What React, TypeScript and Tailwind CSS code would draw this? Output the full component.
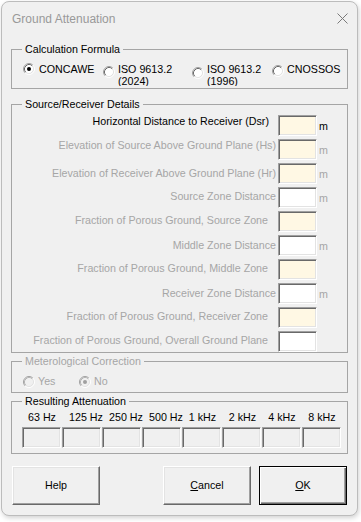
import React from 'react';

type RowDef = {
  label: string;
  enabled?: boolean;
  cream: boolean;
  unit: boolean;
  labelClass: string;
};

const rows: RowDef[] = [
  { label: 'Horizontal Distance to Receiver (Dsr)', enabled: true, cream: true, unit: true, labelClass: 'mr-[9px] mb-[8px]' },
  { label: 'Elevation of Source Above Ground Plane (Hs)', cream: true, unit: true, labelClass: 'mr-[2px] mb-[8px]' },
  { label: 'Elevation of Receiver Above Ground Plane (Hr)', cream: true, unit: true, labelClass: 'mr-[2px]' },
  { label: 'Source Zone Distance', cream: false, unit: true, labelClass: 'mr-[2px] mb-[2px]' },
  { label: 'Fraction of Porous Ground, Source Zone', cream: true, unit: false, labelClass: 'mr-[10px] mb-[2px]' },
  { label: 'Middle Zone Distance', cream: false, unit: true, labelClass: 'mr-[2px] mb-[1px]' },
  { label: 'Fraction of Porous Ground, Middle Zone', cream: true, unit: false, labelClass: 'mr-[10px] mb-[2px]' },
  { label: 'Receiver Zone Distance', cream: false, unit: true, labelClass: 'mr-[2px] mb-[1px]' },
  { label: 'Fraction of Porous Ground, Receiver Zone', cream: true, unit: false, labelClass: 'mr-[10px] mb-[2px]' },
  { label: 'Fraction of Porous Ground, Overall Ground Plane', cream: false, unit: false, labelClass: 'mr-[10px] mb-[3px]' },
];

const bands = [
  { label: '63 Hz', cls: '' },
  { label: '125 Hz', cls: 'pl-[7px]' },
  { label: '250 Hz', cls: 'pl-[7px]' },
  { label: '500 Hz', cls: 'pl-[7px]' },
  { label: '1 kHz', cls: 'pl-[1px]' },
  { label: '2 kHz', cls: 'pl-[1px]' },
  { label: '4 kHz', cls: '' },
  { label: '8 kHz', cls: '' },
];

// classic sunken option button
function Radio({ checked, disabled }: { checked?: boolean; disabled?: boolean }) {
  return (
    <svg width="12" height="12" viewBox="0 0 12 12" className="shrink-0">
      <circle cx="6" cy="6" r="4.5" fill={disabled ? '#f0f0f0' : '#ffffff'} />
      <path d="M2.11 9.89A5.5 5.5 0 0 1 9.89 2.11" fill="none" stroke="#a0a0a0" />
      <path d="M2.82 9.18A4.5 4.5 0 0 1 9.18 2.82" fill="none" stroke={disabled ? '#b4b4b4' : '#696969'} />
      <path d="M9.89 2.11A5.5 5.5 0 0 1 2.11 9.89" fill="none" stroke="#ffffff" />
      <path d="M9.18 2.82A4.5 4.5 0 0 1 2.82 9.18" fill="none" stroke="#e3e3e3" />
      {checked && <circle cx="6" cy="6" r="2" fill={disabled ? '#a0a0a0' : '#000000'} />}
    </svg>
  );
}

function Legend({ children, disabled }: { children: React.ReactNode; disabled?: boolean }) {
  return (
    <legend className={`ml-[10px] px-[3px] leading-[14px] ${disabled ? 'text-[#a6a6a6]' : 'text-black'}`}>
      {children}
    </legend>
  );
}

export default function App() {
  return (
    <div className="w-[361px] h-[522px] bg-white overflow-hidden font-['Liberation_Sans',Arial,sans-serif] text-[10.7px] text-black">
      <div className="mt-[1px] ml-[1px] w-[357px] h-[515px] flex flex-col border border-[#bcbcbc] rounded-[8px] bg-[#f0f0f0] shadow-[1px_2px_5px_rgba(0,0,0,0.18)]">
        {/* Title bar */}
        <div className="h-[33px] flex items-center justify-between pl-[10px] pr-[9px]">
          <span className="text-[12px] text-[#999999]">Ground Attenuation</span>
          <svg width="11" height="11" viewBox="0 0 11 11">
            <path d="M0.5 0.5L10.5 10.5M10.5 0.5L0.5 10.5" stroke="#7a7a7a" strokeWidth="1" />
          </svg>
        </div>

        <div className="flex flex-col px-[9px] pt-[7px]">
          {/* Calculation Formula */}
          <fieldset className="border border-[#a5a5a5] pb-[2px]">
            <Legend>Calculation Formula</Legend>
            <div className="h-[30px] overflow-hidden flex pl-[11px]">
              <div className="w-[80px] flex items-start">
                <div className="mt-[7px]"><Radio checked /></div>
                <div className="mt-[7px] ml-[4px] leading-[13px]">CONCAWE</div>
              </div>
              <div className="w-[89px] flex items-start">
                <div className="mt-[10px]"><Radio /></div>
                <div className="mt-[7px] ml-[3px] leading-[12px]">ISO 9613.2<br />(2024)</div>
              </div>
              <div className="w-[80px] flex items-start">
                <div className="mt-[11px]"><Radio /></div>
                <div className="mt-[7px] ml-[3px] leading-[12px]">ISO 9613.2<br />(1996)</div>
              </div>
              <div className="flex items-start">
                <div className="mt-[9px]"><Radio /></div>
                <div className="mt-[7px] ml-[3px] leading-[13px]">CNOSSOS</div>
              </div>
            </div>
          </fieldset>

          {/* Source/Receiver Details */}
          <fieldset className="mt-[8px] border border-[#a5a5a5]">
            <Legend>Source/Receiver Details</Legend>
            <div className="mt-[4px] flex flex-col gap-[3px]">
              {rows.map((r) => (
                <div key={r.label} className="h-[21px] flex items-center">
                  <div className={`flex-1 text-right leading-[13px] whitespace-nowrap ${r.labelClass} ${r.enabled ? 'text-black' : 'text-[#a6a6a6]'}`}>
                    {r.label}
                  </div>
                  <div
                    className={`w-[39px] h-[21px] border border-t-[#a0a0a0] border-l-[#a0a0a0] border-r-white border-b-white shadow-[inset_1px_1px_0_#696969,inset_-1px_-1px_0_#e3e3e3] ${r.cream ? 'bg-[#fff8e4]' : 'bg-white'}`}
                  />
                  <div className={`w-[30px] pl-[2px] pt-[2px] leading-[13px] ${r.enabled ? 'text-black' : 'text-[#a6a6a6]'}`}>
                    {r.unit ? 'm' : ''}
                  </div>
                </div>
              ))}
            </div>
          </fieldset>

          {/* Meterological Correction */}
          <fieldset className="mt-[1px] border border-[#a5a5a5]">
            <Legend disabled>Meterological Correction</Legend>
            <div className="h-[24px] flex items-start pl-[11px] text-[#a6a6a6]">
              <div className="mt-[8px]"><Radio disabled /></div>
              <div className="mt-[7px] ml-[3px] w-[41px] leading-[13px]">Yes</div>
              <div className="mt-[8px]"><Radio checked disabled /></div>
              <div className="mt-[7px] ml-[3px] leading-[13px]">No</div>
            </div>
          </fieldset>

          {/* Resulting Attenuation */}
          <fieldset className="mt-[1px] border border-[#a5a5a5] pb-[5px]">
            <Legend>Resulting Attenuation</Legend>
            <div className="mt-[3px] h-[13px] flex pl-[10px] leading-[13px]">
              {bands.map((b) => (
                <div key={b.label} className={`w-[40px] text-center whitespace-nowrap ${b.cls}`}>
                  {b.label}
                </div>
              ))}
            </div>
            <div className="mt-[3px] flex gap-[1px] pl-[10px]">
              {bands.map((b) => (
                <div
                  key={b.label}
                  className="w-[39px] h-[21px] border border-t-[#a0a0a0] border-l-[#a0a0a0] border-r-white border-b-white shadow-[inset_1px_1px_0_#696969,inset_-1px_-1px_0_#e3e3e3] bg-[#f0f0f0]"
                />
              ))}
            </div>
          </fieldset>

          {/* Buttons */}
          <div className="mt-[12px] flex">
            <button className="ml-[1px] w-[88px] h-[39px] border border-t-white border-l-white border-r-[#696969] border-b-[#696969] shadow-[inset_-1px_-1px_0_#a0a0a0,inset_1px_1px_0_#e3e3e3] bg-[#f0f0f0] text-black">
              Help
            </button>
            <button className="ml-[63px] w-[88px] h-[39px] border border-t-white border-l-white border-r-[#696969] border-b-[#696969] shadow-[inset_-1px_-1px_0_#a0a0a0,inset_1px_1px_0_#e3e3e3] bg-[#f0f0f0] text-black">
              <span className="underline">C</span>ancel
            </button>
            <button className="ml-[8px] w-[88px] h-[39px] border border-black bg-[#f0f0f0] shadow-[inset_1px_1px_0_#ffffff,inset_-1px_-1px_0_#696969,inset_-2px_-2px_0_#a0a0a0] text-black">
              <span className="underline">O</span>K
            </button>
          </div>
        </div>
      </div>
    </div>
  );
}
